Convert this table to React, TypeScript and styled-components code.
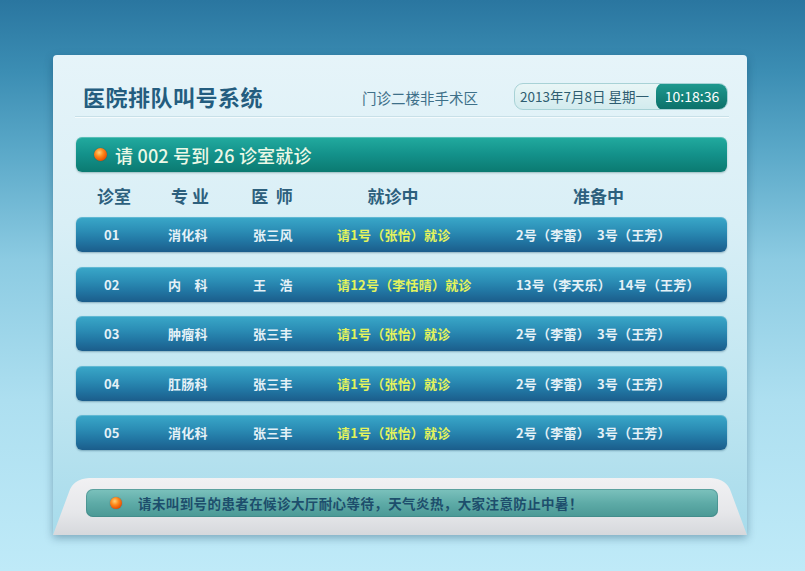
import React from "react";
import styled, { createGlobalStyle } from "styled-components";

const Global = createGlobalStyle`
  html, body { margin: 0; padding: 0; }
  body {
    font-family: "Noto Sans CJK SC", "Noto Sans", sans-serif;
    background: linear-gradient(180deg, #2a76a0 0px, #3b8db3 70px, #5aa8c8 150px, #8ccbe2 260px, #addff0 400px, #bfeaf8 571px);
    min-height: 571px;
  }
`;

const Page = styled.div`
  width: 805px;
  height: 571px;
  padding: 55px 0 0 53px;
  box-sizing: border-box;
  overflow: hidden;
`;

const Panel = styled.div`
  width: 694px;
  height: 480px;
  border-radius: 4px 4px 0 0;
  background: linear-gradient(180deg, #e6f4f9 0%, #d9eff6 35%, #c0e6f1 70%, #a7dbeb 100%);
  box-shadow: 0 3px 8px rgba(10, 50, 80, 0.35);
  display: flex;
  flex-direction: column;
`;

const Header = styled.div`
  height: 62px;
  box-sizing: border-box;
  padding: 21px 1px 0 8px;
  margin: 0 18px 0 22px;
  display: flex;
  align-items: center;
  border-bottom: 1px solid #c8e0e8;
  box-shadow: 0 1px 0 #f4fbfd;
`;

const Title = styled.h1`
  margin: 0;
  font-size: 22px;
  font-weight: 700;
  color: #245d7f;
  letter-spacing: 0.5px;
  line-height: 1;
`;

const Location = styled.div`
  margin-left: auto;
  margin-right: 36px;
  margin-top: 5px;
  font-size: 14.5px;
  color: #3e7089;
  line-height: 1;
`;

const DateBox = styled.div`
  width: 214px;
  height: 27px;
  box-sizing: border-box;
  border: 1px solid #a8d2d6;
  border-radius: 9px;
  background: linear-gradient(180deg, #e9f6f6 0%, #d2ebee 100%);
  display: flex;
  align-items: center;
  overflow: hidden;
`;

const DateText = styled.span`
  flex: 1;
  padding-left: 5px;
  font-size: 13.5px;
  color: #2e5d70;
  white-space: nowrap;
`;

const Time = styled.span`
  width: 72px;
  height: 27px;
  margin: -1px -1px -1px 0;
  border-radius: 8px;
  background: linear-gradient(180deg, #1f9a90 0%, #0b6f68 100%);
  color: #ffffff;
  font-size: 14px;
  display: flex;
  align-items: center;
  justify-content: center;
`;

const CallBar = styled.div`
  margin: 20px 20px 0 23px;
  height: 35px;
  border-radius: 6px;
  background: linear-gradient(180deg, #22ab9f 0%, #13918a 50%, #0b7a71 100%);
  box-shadow: inset 0 1px 0 rgba(255, 255, 255, 0.25), 0 1px 2px rgba(0, 60, 60, 0.3);
  display: flex;
  align-items: center;
  padding-left: 18px;
  gap: 8px;
`;

const Dot = styled.span<{ $size?: number }>`
  width: ${(p) => p.$size ?? 12}px;
  height: ${(p) => p.$size ?? 12}px;
  border-radius: 50%;
  flex: none;
  background: radial-gradient(circle at 40% 35%, #ffd27a 0%, #ff8a1c 35%, #e64b00 75%, #b83000 100%);
  box-shadow: 0 0 1px rgba(80, 20, 0, 0.6);
`;

const CallText = styled.span`
  font-size: 18px;
  font-weight: 500;
  color: #ecf8e6;
  letter-spacing: 0.2px;
`;

const HeadRow = styled.div`
  display: grid;
  grid-template-columns: 76px 76px 88px 154px 257px;
  margin: 0 20px 0 23px;
  height: 45px;
  align-items: center;
`;

const HeadCell = styled.div`
  text-align: center;
  font-size: 17px;
  font-weight: 700;
  color: #2d607d;
  padding-top: 2px;
  white-space: pre;
`;

const Rows = styled.div`
  margin: 0 20px 0 23px;
  display: flex;
  flex-direction: column;
  gap: 14.5px;
`;

const Row = styled.div`
  height: 35px;
  border-radius: 6px;
  background: linear-gradient(180deg, #3aa8c9 0%, #2b8db5 40%, #2175a2 70%, #1b5d8b 100%);
  box-shadow: inset 0 1px 0 rgba(255, 255, 255, 0.2), 0 1px 2px rgba(10, 60, 90, 0.35);
  display: grid;
  grid-template-columns: 64px 85px 84px 179px 1fr;
  align-items: center;
  padding-left: 28px;
  font-size: 13px;
  font-weight: 700;
  color: #e4f1f7;
  white-space: pre;
`;

const Cell = styled.span<{ $hl?: boolean }>`
  color: ${(p) => (p.$hl ? "#e3f35c" : "#e4f1f7")};
  letter-spacing: 0.2px;
`;

const Waiting = styled.span`
  display: flex;
  gap: 7px;
  letter-spacing: 0.3px;
`;

const Tray = styled.div`
  margin-top: auto;
  height: 57px;
  box-sizing: border-box;
  padding: 11px 29px 0 33px;
  background: linear-gradient(180deg, #f1f1f3 0%, #e6e7ea 60%, #d6d8dc 100%);
  clip-path: path("M0 57 L16 14 Q20 1 36 0 L658 0 Q674 1 678 14 L694 57 Z");
`;

const Notice = styled.div`
  height: 28px;
  border-radius: 7px;
  background: linear-gradient(180deg, #7cc2bd 0%, #5eaba7 50%, #4a9895 100%);
  box-shadow: inset 0 0 0 1px rgba(60, 130, 130, 0.5);
  display: flex;
  align-items: center;
  padding-left: 24px;
  gap: 16px;
`;

const NoticeText = styled.span`
  font-size: 13.5px;
  font-weight: 700;
  color: #1d4e6c;
  letter-spacing: 0.4px;
`;

const rows = [
  { room: "01", dept: "消化科", doc: "张三风", now: "请1号（张怡）就诊", next: ["2号（李蕾）", "3号（王芳）"] },
  { room: "02", dept: "内　科", doc: "王　浩", now: "请12号（李恬晴）就诊", next: ["13号（李天乐）", "14号（王芳）"] },
  { room: "03", dept: "肿瘤科", doc: "张三丰", now: "请1号（张怡）就诊", next: ["2号（李蕾）", "3号（王芳）"] },
  { room: "04", dept: "肛肠科", doc: "张三丰", now: "请1号（张怡）就诊", next: ["2号（李蕾）", "3号（王芳）"] },
  { room: "05", dept: "消化科", doc: "张三丰", now: "请1号（张怡）就诊", next: ["2号（李蕾）", "3号（王芳）"] },
];

export default function App() {
  return (
    <>
      <Global />
      <Page>
        <Panel>
          <Header>
            <Title>医院排队叫号系统</Title>
            <Location>门诊二楼非手术区</Location>
            <DateBox>
              <DateText>2013年7月8日 星期一</DateText>
              <Time>10:18:36</Time>
            </DateBox>
          </Header>
          <CallBar>
            <Dot $size={13} />
            <CallText>请 002 号到 26 诊室就诊</CallText>
          </CallBar>
          <HeadRow>
            <HeadCell>诊室</HeadCell>
            <HeadCell>专 业</HeadCell>
            <HeadCell>医  师</HeadCell>
            <HeadCell>就诊中</HeadCell>
            <HeadCell>准备中</HeadCell>
          </HeadRow>
          <Rows>
            {rows.map((r) => (
              <Row key={r.room}>
                <Cell>{r.room}</Cell>
                <Cell>{r.dept}</Cell>
                <Cell>{r.doc}</Cell>
                <Cell $hl>{r.now}</Cell>
                <Waiting>
                  <Cell>{r.next[0]}</Cell>
                  <Cell>{r.next[1]}</Cell>
                </Waiting>
              </Row>
            ))}
          </Rows>
          <Tray>
            <Notice>
              <Dot $size={12} />
              <NoticeText>请未叫到号的患者在候诊大厅耐心等待，天气炎热，大家注意防止中暑！</NoticeText>
            </Notice>
          </Tray>
        </Panel>
      </Page>
    </>
  );
}
